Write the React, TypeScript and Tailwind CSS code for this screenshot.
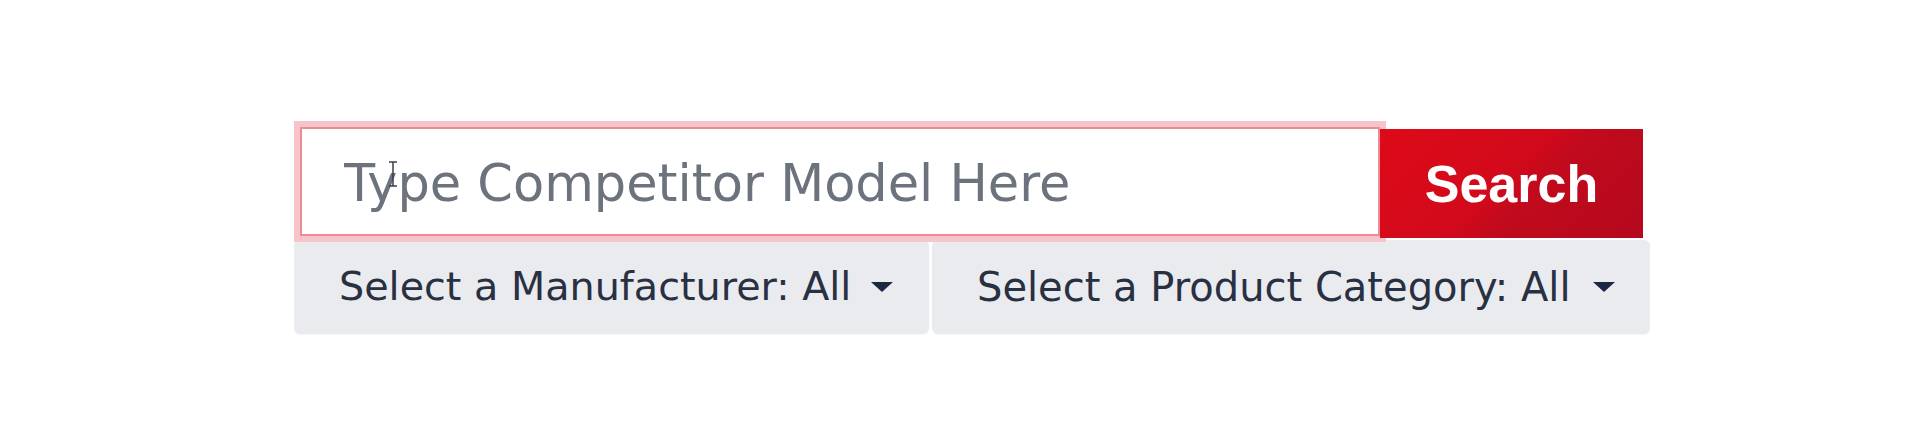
import React from "react";

function Caret() {
    return (
        <span className="ml-[20px] inline-block h-0 w-0 border-x-[11px] border-t-[10px] border-x-transparent border-t-[#1c2744]"/>
    );
}

export default function App() {
    return (
        <div className="min-h-screen bg-white font-['DejaVu_Sans',sans-serif]">
            <div className="flex flex-col pl-[294px] pt-[121px]">
                <div className="flex items-start pl-[6px] pt-[6px]">
                    <div className="relative">
                        <input
                            type="text"
                            placeholder="Type Competitor Model Here"
                            className="h-[109px] w-[1080px] border-2 border-[#ec8c96] bg-white pl-[42px] pt-[4px] text-[51px] leading-none text-[#374151] shadow-[0_0_0_6px_#f7c4c9] outline-none placeholder:text-[#6c737d]"
                        />
                        {/* mouse cursor */}
                        <svg className="pointer-events-none absolute left-[88px] top-[34px]" width="10" height="26" viewBox="0 0 10 26">
                            <path d="M1 1h8M5 1v24M1 25h8" stroke="#3b3f46" strokeWidth="1.5" fill="none"/>
                        </svg>
                    </div>
                    <button
                        className="relative mt-[2px] flex h-[109px] w-[263px] items-center justify-center bg-[linear-gradient(135deg,#de0a19_0%,#d20a1b_45%,#c00a1d_60%,#b5091d_100%)] font-['Liberation_Sans',sans-serif] text-[52px] font-bold leading-none text-white">
                        Search
                    </button>
                </div>
                <div className="mt-[2px] flex gap-[3px]">
                    <button
                        className="flex h-[94px] w-[635px] items-center rounded-[6px] bg-[#e9ebef] pl-[45px] text-[39.7px] leading-none text-[#283041] shadow-[0_1px_1px_rgba(0,0,0,0.04)]">
                        <span>Select a Manufacturer: All</span>
                        <Caret/>
                    </button>
                    <button
                        className="flex h-[94px] w-[718px] items-center rounded-[6px] bg-[#e9ebef] pl-[45px] text-[40px] leading-none text-[#283041] shadow-[0_1px_1px_rgba(0,0,0,0.04)]">
                        <span>Select a Product Category: All</span>
                        <span className="ml-[22px] inline-block h-0 w-0 border-x-[11px] border-t-[10px] border-x-transparent border-t-[#1c2744]"/>
                    </button>
                </div>
            </div>
        </div>
    );
}
